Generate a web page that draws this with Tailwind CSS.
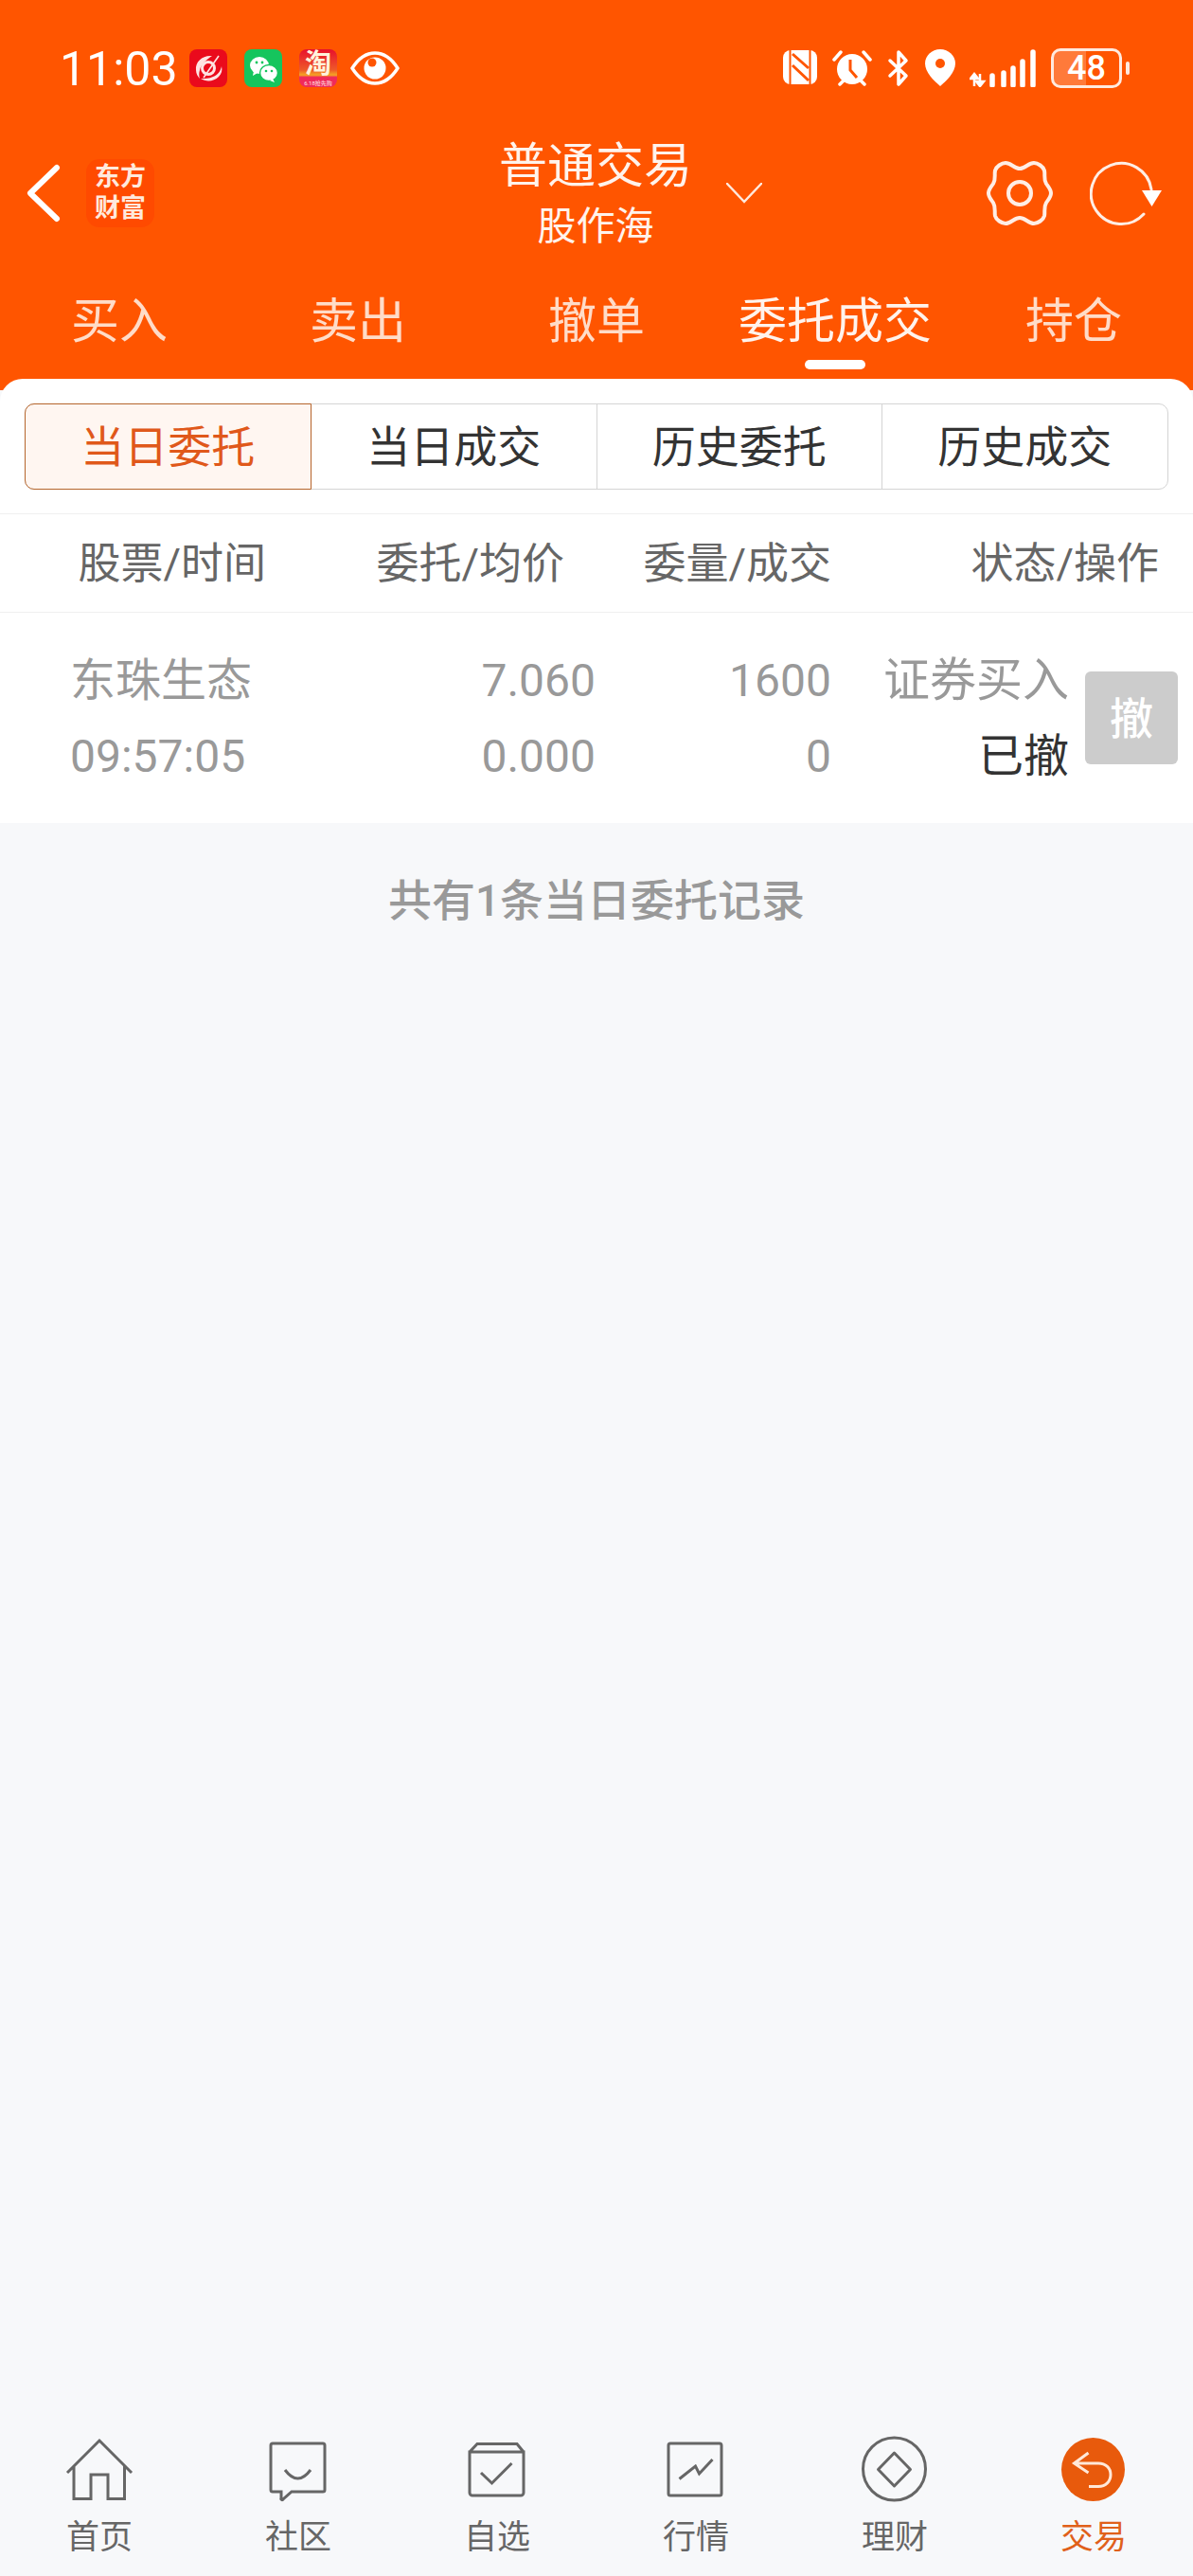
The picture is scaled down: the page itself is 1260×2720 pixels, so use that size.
<!DOCTYPE html>
<html lang="zh">
<head>
    <meta charset="UTF-8">
    <meta name="viewport" content="width=device-width, initial-scale=1.0">
    <title>普通交易</title>
    <script src="https://cdn.jsdelivr.net/npm/@tailwindcss/browser@4"></script>
</head>
<body class="bg-[#f7f8fa] [font-family:Roboto,'Noto_Sans_CJK_SC',sans-serif]">
<div class="w-[1260px] h-[2720px] flex flex-col overflow-hidden">

    <!-- orange header -->
    <header class="bg-[#ff5500] text-white h-[412px] shrink-0">
        <!-- status bar -->
        <div class="h-[146px] pt-[52px] pl-[63px] flex items-start">
            <div class="w-[137px] h-[40px] leading-[42px] text-[50px]">11:03</div>
            <svg class="w-[40px] h-[40px]" viewBox="0 0 40 40">
                <rect width="40" height="40" rx="8" fill="#ea0a1c"/>
                <path d="M24 7C14 6 6 13 7 22c0 4 2 7 4 9-1-3-1-6 0-9 1-6 7-11 13-15z" fill="#ffe3e3"/>
                <path d="M12 31c6 4 14 3 19-2 3-3 4-7 3-11-1 5-4 9-9 11-4 2-9 2-13 2z" fill="#ffe3e3"/>
                <circle cx="20" cy="20" r="6.5" fill="none" stroke="#ffe3e3" stroke-width="3"/>
                <path d="M15 30 31 7" stroke="#ffe3e3" stroke-width="1.6"/>
            </svg>
            <svg class="w-[40px] h-[40px] ml-[18px]" viewBox="0 0 40 40">
                <rect width="40" height="40" rx="8" fill="#15c55d"/>
                <ellipse cx="16" cy="17" rx="10" ry="9" fill="#fff"/>
                <path d="M10 23l-1 5 5-3z" fill="#fff"/>
                <ellipse cx="26" cy="25" rx="9.5" ry="8.5" fill="#fff" stroke="#15c55d" stroke-width="1.5"/>
                <path d="M30 31l2 4-5-2z" fill="#fff"/>
                <circle cx="13" cy="14" r="1.4" fill="#15c55d"/>
                <circle cx="19" cy="14" r="1.4" fill="#15c55d"/>
                <circle cx="23" cy="23" r="1.3" fill="#15c55d"/>
                <circle cx="29" cy="23" r="1.3" fill="#15c55d"/>
            </svg>
            <div class="w-[40px] h-[40px] ml-[18px] rounded-[8px] flex flex-col items-center bg-[linear-gradient(180deg,#e8102c_0%,#ee5a2a_55%,#f5a623_68%,#f02a5a_74%)]">
                <span class="text-[28px] leading-[31px] font-bold text-[#fff3dc]">淘</span>
                <span class="text-[6px] leading-[9px] whitespace-nowrap text-[#ffe3e3]">6.18抢先购</span>
            </div>
            <svg class="w-[52px] h-[36px] ml-[14px] mt-[2px]" viewBox="0 0 52 36">
                <path d="M2 18C9 7 17 2 26 2s17 5 24 16c-7 11-15 16-24 16S9 29 2 18z" fill="none" stroke="#fff" stroke-width="3.5"/>
                <circle cx="26" cy="18" r="11.5" fill="#fff"/>
                <circle cx="23" cy="12" r="4.5" fill="#ff5500"/>
            </svg>

            <svg class="w-[36px] h-[38px] ml-[405px]" viewBox="0 0 36 38">
                <rect x="0" y="1" width="36" height="36" rx="8" fill="#fff"/>
                <path d="M7.5 0v38M28.5 0v38" stroke="#ff5500" stroke-width="2" fill="none"/>
                <path d="M10 5 27 20M10 17 27 33" stroke="#ff5500" stroke-width="3" fill="none"/>
            </svg>
            <svg class="w-[42px] h-[40px] ml-[16px]" viewBox="0 0 42 40">
                <circle cx="21" cy="21" r="16" fill="#fff"/>
                <path d="M19 11v11l7 8" stroke="#ff5500" stroke-width="3" fill="none"/>
                <path d="M2 11 9 3M40 11 33 3M8 37l4-4M34 37l-4-4" stroke="#fff" stroke-width="3.5" stroke-linecap="round"/>
            </svg>
            <svg class="w-[24px] h-[40px] ml-[16px]" viewBox="0 0 24 40">
                <path d="M3 12 20 28 12 37V3l8 9L3 28" fill="none" stroke="#fff" stroke-width="3.5" stroke-linejoin="round" stroke-linecap="round"/>
            </svg>
            <svg class="w-[32px] h-[39px] ml-[16px]" viewBox="0 0 32 39">
                <path d="M16 0C7 0 0 7 0 15c0 9 9 18 16 24 7-6 16-15 16-24C32 7 25 0 16 0z" fill="#fff"/>
                <circle cx="16" cy="15" r="5" fill="#ff5500"/>
            </svg>
            <svg class="w-[70px] h-[40px] ml-[15px]" viewBox="0 0 70 40">
                <path d="M5 27v12M1 31l4-5 4 5z" stroke="#fff" stroke-width="2.5" fill="#fff"/>
                <path d="M11 26v12M7 34l4 5 4-5z" stroke="#fff" stroke-width="2.5" fill="#fff"/>
                <path d="M24 28v10M36 25v13M46 20v18M56 13v25M67 3v35" stroke="#fff" stroke-width="5.5" stroke-linecap="round"/>
            </svg>
            <div class="w-[75px] h-[42px] ml-[16px] -mt-[1px] rounded-[10px] border-[3px] border-[#ffeadf] flex items-center justify-center text-[36px] leading-none font-medium bg-[linear-gradient(90deg,#ff7a3a_49%,transparent_49%)]">48</div>
            <div class="w-[4px] h-[14px] ml-[4px] mt-[13px] rounded-full bg-[#ffeadf]"></div>
        </div>

        <!-- title row -->
        <div class="h-[116px] flex items-center pl-[27px]">
            <svg class="w-[38px] h-[62px]" viewBox="0 0 38 62">
                <path d="M33 4 5 31l28 27" fill="none" stroke="#fff" stroke-width="6" stroke-linecap="round" stroke-linejoin="round"/>
            </svg>
            <div class="w-[72px] h-[72px] ml-[26px] rounded-[14px] bg-[#ff4a00] flex flex-col items-center justify-center text-[27px] leading-[33px] font-bold text-[#ffe9dd]">
                <span>东方</span>
                <span>财富</span>
            </div>
            <div class="w-[202px] ml-[365px] mt-[4px] flex flex-col items-center">
                <span class="text-[51px] leading-[66px] text-[#fff3ec] whitespace-nowrap">普通交易</span>
                <span class="text-[41px] leading-[60px] text-[#fff3ec] whitespace-nowrap">股作海</span>
            </div>
            <svg class="w-[38px] h-[22px] ml-[37px]" viewBox="0 0 38 22">
                <path d="M1 1 19 20 37 1" fill="none" stroke="#ffe9dd" stroke-width="2.5" stroke-linecap="round"/>
            </svg>
            <svg class="w-[72px] h-[70px] ml-[236px]" viewBox="0 0 72 70">
                <path d="M36 9C30 9 27 3 21 3C17 3 11 7 10 11C9 16 11 20 8 25C6 28 3 31 3 35C3 39 6 42 8 45C11 50 9 54 10 59C11 63 17 67 21 67C27 67 30 61 36 61C42 61 45 67 51 67C55 67 61 63 62 59C63 54 61 50 64 45C66 42 69 39 69 35C69 31 66 28 64 25C61 20 63 16 62 11C61 7 55 3 51 3C45 3 42 9 36 9Z" fill="none" stroke="#ffeee5" stroke-width="4"/>
                <circle cx="36" cy="35" r="12" fill="none" stroke="#ffeee5" stroke-width="4"/>
            </svg>
            <svg class="w-[76px] h-[70px] ml-[38px]" viewBox="0 0 76 70">
                <path d="M57 57A32 32 0 1 1 65 31" fill="none" stroke="#ffeee5" stroke-width="3" stroke-linecap="round"/>
                <path d="M55 32H76L65.5 49Z" fill="#fff"/>
            </svg>
        </div>

        <!-- tabs -->
        <nav class="h-[138px] grid grid-cols-5 pt-[50px] text-[51px] leading-[56px] text-[#ffdcc8]">
            <div class="text-center">买入</div>
            <div class="text-center">卖出</div>
            <div class="text-center">撤单</div>
            <div class="flex flex-col items-center text-[#fff3ec]">
                <span class="whitespace-nowrap">委托成交</span>
                <span class="w-[64px] h-[10px] mt-[12px] rounded-full bg-white"></span>
            </div>
            <div class="text-center">持仓</div>
        </nav>
    </header>

    <!-- white panel -->
    <section class="bg-white rounded-t-[24px] -mt-[12px] pt-[26px] relative">
        <div class="mx-[26px] h-[91px] grid grid-cols-4 text-[46px] text-[#333] rounded-[10px] border border-[#d4d4d4]">
            <div class="flex items-center justify-center pt-[2px] -ml-px -my-px rounded-l-[10px] border border-[#b5652c] bg-[#fff6f1] text-[#e0581a]">当日委托</div>
            <div class="flex items-center justify-center pt-[2px]">当日成交</div>
            <div class="flex items-center justify-center pt-[2px] border-x border-[#d4d4d4]">历史委托</div>
            <div class="flex items-center justify-center pt-[2px]">历史成交</div>
        </div>

        <div class="mt-[25px] h-[105px] pt-[2px] border-y border-[#f0f0f0] grid grid-cols-[281px_315px_282px_346px] items-center text-right text-[45px] text-[#666]">
            <div>股票/时间</div>
            <div>委托/均价</div>
            <div>委量/成交</div>
            <div>状态/操作</div>
        </div>

        <div class="h-[222px] pt-[2px] flex items-center text-[48px] leading-[80px] text-[#999]">
            <div class="w-[629px] flex">
                <div class="pl-[74px] w-[400px]">
                    <div>东珠生态</div>
                    <div>09:57:05</div>
                </div>
                <div class="w-[229px] text-right">
                    <div>7.060</div>
                    <div>0.000</div>
                </div>
            </div>
            <div class="w-[249px] text-right">
                <div>1600</div>
                <div>0</div>
            </div>
            <div class="w-[251px] text-right">
                <div class="text-[49px]">证券买入</div>
                <div class="text-[#333]">已撤</div>
            </div>
            <div class="w-[98px] h-[98px] ml-[17px] -mt-[2px] pt-[2px] rounded-[6px] bg-[#cccccc] text-white text-[46px] font-medium flex items-center justify-center">撤</div>
        </div>
    </section>

    <main class="flex-1 pt-[52px] text-center text-[46px] leading-[60px] font-medium text-[#999]">
        共有1条当日委托记录
    </main>

    <!-- bottom nav -->
    <nav class="h-[150px] shrink-0 grid grid-cols-6 text-[35px] leading-[40px] text-[#666]">
        <div class="flex flex-col items-center">
            <svg class="w-[90px] h-[76px]" viewBox="0 0 90 76" fill="none" stroke="#666" stroke-width="3">
                <path d="M11 41 45 7 79 41M18 34V68.5H36V43H54V68.5H71.5V34"/>
            </svg>
            <span class="mt-[14px]">首页</span>
        </div>
        <div class="flex flex-col items-center">
            <svg class="w-[90px] h-[76px]" viewBox="0 0 90 76" fill="none" stroke="#666" stroke-width="3">
                <path d="M18 10H71a2 2 0 0 1 2 2v47a2 2 0 0 1-2 2H38l-9 8a1 1 0 0 1-2-1v-7H18a2 2 0 0 1-2-2V12a2 2 0 0 1 2-2z"/>
                <path d="M31 38Q44.5 56 58 38"/>
            </svg>
            <span class="mt-[14px]">社区</span>
        </div>
        <div class="flex flex-col items-center">
            <svg class="w-[90px] h-[76px]" viewBox="0 0 90 76" fill="none" stroke="#666" stroke-width="3">
                <path d="M16 19 24 10.5H66L73 19M16 19H73V62a3 3 0 0 1-3 3H19a3 3 0 0 1-3-3Z"/>
                <path d="M28 41 39.5 52 60.5 31"/>
            </svg>
            <span class="mt-[14px]">自选</span>
        </div>
        <div class="flex flex-col items-center">
            <svg class="w-[90px] h-[76px]" viewBox="0 0 90 76" fill="none" stroke="#666" stroke-width="3">
                <rect x="16" y="10" width="56" height="55" rx="2"/>
                <path d="M27.5 47.5 44.5 34 48.5 42 62.5 27"/>
            </svg>
            <span class="mt-[14px]">行情</span>
        </div>
        <div class="flex flex-col items-center">
            <svg class="w-[90px] h-[76px]" viewBox="0 0 90 76" fill="none" stroke="#666" stroke-width="3">
                <circle cx="44.5" cy="37" r="33"/>
                <path d="M44.5 20 61.5 37.5 44.5 55 27.5 37.5Z" stroke-linejoin="round"/>
            </svg>
            <span class="mt-[14px]">理财</span>
        </div>
        <div class="flex flex-col items-center text-[#e0601a]">
            <svg class="w-[90px] h-[76px]" viewBox="0 0 90 76" fill="none">
                <circle cx="44.5" cy="37.5" r="33.5" fill="#e85a0c"/>
                <path d="M39.5 20 24.5 31 39.5 41M24.5 31H50C58 31 63 36 63 43S58 55.5 50 55.5H40" stroke="#ffe8d8" stroke-width="3"/>
            </svg>
            <span class="mt-[14px]">交易</span>
        </div>
    </nav>
</div>
</body>
</html>
